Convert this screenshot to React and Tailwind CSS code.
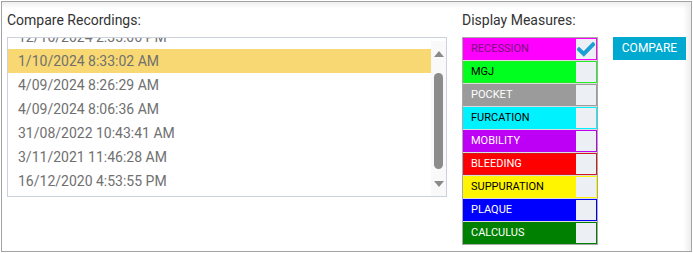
import { useState } from 'react';

const recordings = [
  '12/10/2024 2:35:06 PM',
  '1/10/2024 8:33:02 AM',
  '4/09/2024 8:26:29 AM',
  '4/09/2024 8:06:36 AM',
  '31/08/2022 10:43:41 AM',
  '3/11/2021 11:46:28 AM',
  '16/12/2020 4:53:55 PM',
];

const measures = [
  { name: 'RECESSION', row: 'bg-[#ff00ff] border-[#ff00ff]', text: 'text-[#7a127a]', checked: true },
  { name: 'MGJ', row: 'bg-[#00ff1e] border-[#22ee22]', text: 'text-black' },
  { name: 'POCKET', row: 'bg-[#9b9b9b] border-[#9b9b9b]', text: 'text-white' },
  { name: 'FURCATION', row: 'bg-[#00f2ff] border-[#00f2ff]', text: 'text-black' },
  { name: 'MOBILITY', row: 'bg-[#bd00f5] border-[#bd00f5]', text: 'text-white' },
  { name: 'BLEEDING', row: 'bg-[#ff0000] border-[#d11a1a]', text: 'text-white' },
  { name: 'SUPPURATION', row: 'bg-[#fff500] border-[#fff500]', text: 'text-black' },
  { name: 'PLAQUE', row: 'bg-[#0000ff] border-[#0000ff]', text: 'text-white' },
  { name: 'CALCULUS', row: 'bg-[#008000] border-[#008000]', text: 'text-white' },
];

const Check = () => (
  <svg width="18" height="15" viewBox="0 0 18 15">
    <path d="M2 7.5 L6.8 12 L16 2.5" fill="none" stroke="#1b9fd6" strokeWidth="4" strokeLinecap="square" />
  </svg>
);

export default function App() {
  const [selected] = useState(1);

  return (
    <div className="w-[693px] h-[253px] p-px bg-white" style={{ fontFamily: 'Roboto, "Liberation Sans", sans-serif' }}>
      <div className="h-full border border-[#a3a3a3] shadow-[inset_-4px_3px_5px_rgba(0,0,0,0.07)] flex pl-[5px] pt-2">
        {/* recordings */}
        <div className="w-[440px] flex flex-col">
          <div className="text-[14px] leading-5 text-[#333] h-5 mb-[7px]">Compare Recordings:</div>
          <div className="h-[160px] border border-[#cbd2dc] flex bg-white">
            <div className="flex-1 overflow-hidden">
              <div className="-mt-[13px]">
                {recordings.map((r, i) => (
                  <div
                    key={r}
                    className={`h-6 leading-6 pl-[10px] text-[14px] text-[#707070] ${i === selected ? 'bg-[#f8d872]' : ''}`}
                  >
                    {r}
                  </div>
                ))}
              </div>
            </div>
            <div className="w-[15px] bg-[#f9f9f9] flex flex-col items-center pt-[10px] pb-[9px] mt-[3px]">
              <div className="w-0 h-0 border-l-[5px] border-r-[5px] border-b-[6px] border-l-transparent border-r-transparent border-b-[#8a8a8a]" />
              <div className="w-[9px] h-[96px] rounded-[5px] bg-[#8c8c8c] mt-[16px]" />
              <div className="flex-1" />
              <div className="w-0 h-0 border-l-[5px] border-r-[5px] border-t-[6px] border-l-transparent border-r-transparent border-t-[#8a8a8a]" />
            </div>
          </div>
        </div>

        {/* measures */}
        <div className="ml-[15px] flex flex-col">
          <div className="text-[14px] leading-5 text-[#333] h-5 mb-[7px]">Display Measures:</div>
          <div className="flex items-start">
            <div className="w-[136px] border border-[#a9a9a9] bg-[#dcdcdc] flex flex-col gap-px">
              {measures.map((m) => (
                <div key={m.name} className={`h-[22px] border flex ${m.row}`}>
                  <div className={`flex-1 pl-[7px] text-[11px] leading-5 ${m.text}`}>{m.name}</div>
                  <div className="w-5 h-5 bg-[#eceff4] flex items-center justify-center">
                    {m.checked && <Check />}
                  </div>
                </div>
              ))}
            </div>
            <button className="ml-[15px] w-[73px] h-[23px] bg-[#00a9d0] text-white text-[12px] leading-[23px] text-center">
              COMPARE
            </button>
          </div>
        </div>
      </div>
    </div>
  );
}
